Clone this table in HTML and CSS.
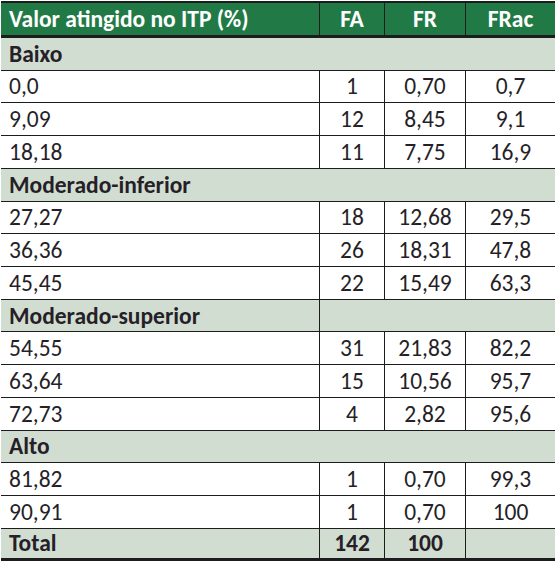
FILE: index.html
```html
<!DOCTYPE html>
<html lang="pt">
<head>
<meta charset="utf-8">
<title>Tabela ITP</title>
<link rel="stylesheet" href="styles.css">
</head>
<body>
<table class="tbl">
  <colgroup>
    <col class="c1"><col class="c2"><col class="c3"><col class="c4">
  </colgroup>
  <thead>
    <tr class="head">
      <th class="lbl">Valor atingido no ITP (%)</th>
      <th class="sep">FA</th>
      <th class="sep">FR</th>
      <th class="sep">FRac</th>
    </tr>
  </thead>
  <tbody>
    <tr class="cat"><td class="lbl" colspan="4">Baixo</td></tr>
    <tr><td class="lbl">0,0</td><td class="sep">1</td><td class="sep">0,70</td><td class="sep">0,7</td></tr>
    <tr><td class="lbl">9,09</td><td class="sep">12</td><td class="sep">8,45</td><td class="sep">9,1</td></tr>
    <tr><td class="lbl">18,18</td><td class="sep">11</td><td class="sep">7,75</td><td class="sep">16,9</td></tr>
    <tr class="cat"><td class="lbl" colspan="4">Moderado-inferior</td></tr>
    <tr><td class="lbl">27,27</td><td class="sep">18</td><td class="sep">12,68</td><td class="sep">29,5</td></tr>
    <tr><td class="lbl">36,36</td><td class="sep">26</td><td class="sep">18,31</td><td class="sep">47,8</td></tr>
    <tr><td class="lbl">45,45</td><td class="sep">22</td><td class="sep">15,49</td><td class="sep">63,3</td></tr>
    <tr class="cat"><td class="lbl">Moderado-superior</td><td class="sep" colspan="3"></td></tr>
    <tr><td class="lbl">54,55</td><td class="sep">31</td><td class="sep">21,83</td><td class="sep">82,2</td></tr>
    <tr><td class="lbl">63,64</td><td class="sep">15</td><td class="sep">10,56</td><td class="sep">95,7</td></tr>
    <tr><td class="lbl">72,73</td><td class="sep">4</td><td class="sep">2,82</td><td class="sep">95,6</td></tr>
    <tr class="cat"><td class="lbl" colspan="4">Alto</td></tr>
    <tr><td class="lbl">81,82</td><td class="sep">1</td><td class="sep">0,70</td><td class="sep">99,3</td></tr>
    <tr><td class="lbl">90,91</td><td class="sep">1</td><td class="sep">0,70</td><td class="sep">100</td></tr>
    <tr class="cat total"><td class="lbl">Total</td><td class="sep">142</td><td class="sep">100</td><td class="sep"></td></tr>
  </tbody>
</table>
</body>
</html>
```
FILE: styles.css
```css
html, body {
  margin: 0;
  padding: 0;
  background: #ffffff;
}
body {
  padding: 1px 0 0 1px;
  font-family: Carlito, Calibri, "Open Sans", sans-serif;
  color: #261f28;
}
.tbl {
  border-collapse: separate;
  border-spacing: 0;
  width: 554px;
  table-layout: fixed;
  font-size: 23.5px;
  border-bottom: 3px solid #1c1c1c;
}
.c1 { width: 318px; }
.c2 { width: 65px; }
.c3 { width: 81px; }
.c4 { width: 90px; }
.tbl th, .tbl td {
  padding: 0;
  box-sizing: border-box;
  white-space: nowrap;
  line-height: 1.2;
}
.head th {
  background: #217a46;
  color: #ffffff;
  font-weight: bold;
  height: 37px;
  border-top: 2px solid #1c1c1c;
  border-bottom: 3px solid #1c1c1c;
  text-align: center;
}
.head th.lbl { text-align: left; }
.lbl {
  text-align: left;
  padding-left: 8px !important;
}
.sep {
  text-align: center;
  border-left: 1px solid #1c1c1c;
}
.tbl td {
  height: 32.73px;
  border-bottom: 1px solid #1c1c1c;
}
.cat td {
  background: #d2ddd2;
  font-weight: bold;
}
.total td {
  height: 29px;
  border-bottom: 0;
}
```
